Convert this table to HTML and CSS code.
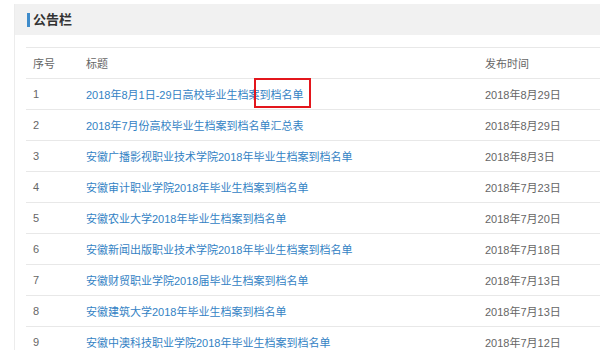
FILE: index.html
```html
<!DOCTYPE html>
<html lang="zh-CN">
<head>
<meta charset="utf-8">
<title>公告栏</title>
<link rel="stylesheet" href="styles.css">
</head>
<body>
<div class="panel">
  <div class="panel-head"><span class="panel-title">公告栏</span></div>
  <div class="panel-body">
    <table class="notice">
      <thead>
        <tr><th class="c-no">序号</th><th class="c-title">标题</th><th class="c-date">发布时间</th></tr>
      </thead>
      <tbody>
        <tr><td>1</td><td><a href="#">2018年8月1日-29日高校毕业生档案<span class="mark">到档名单</span></a></td><td>2018年8月29日</td></tr>
        <tr><td>2</td><td><a href="#">2018年7月份高校毕业生档案到档名单汇总表</a></td><td>2018年8月29日</td></tr>
        <tr><td>3</td><td><a href="#">安徽广播影视职业技术学院2018年毕业生档案到档名单</a></td><td>2018年8月3日</td></tr>
        <tr><td>4</td><td><a href="#">安徽审计职业学院2018年毕业生档案到档名单</a></td><td>2018年7月23日</td></tr>
        <tr><td>5</td><td><a href="#">安徽农业大学2018年毕业生档案到档名单</a></td><td>2018年7月20日</td></tr>
        <tr><td>6</td><td><a href="#">安徽新闻出版职业技术学院2018年毕业生档案到档名单</a></td><td>2018年7月18日</td></tr>
        <tr><td>7</td><td><a href="#">安徽财贸职业学院2018届毕业生档案到档名单</a></td><td>2018年7月13日</td></tr>
        <tr><td>8</td><td><a href="#">安徽建筑大学2018年毕业生档案到档名单</a></td><td>2018年7月13日</td></tr>
        <tr><td>9</td><td><a href="#">安徽中澳科技职业学院2018年毕业生档案到档名单</a></td><td>2018年7月12日</td></tr>
      </tbody>
    </table>
  </div>
</div>
</body>
</html>
```
FILE: styles.css
```css
html, body {
  margin: 0;
  padding: 0;
  overflow: hidden;
  background: #fff;
}
body {
  font-family: "Liberation Sans", "Noto Sans CJK SC", sans-serif;
  font-size: 11px;
  color: #666;
}
.panel {
  margin: 4px 0 0 14px;
  border-left: 1px solid #ececec;
  width: 585px;
}
.panel-head {
  height: 31px;
  background: #f1f1f1;
  display: flex;
  align-items: center;
  padding-left: 12px;
}
.panel-title {
  border-left: 3px solid #3f8ccb;
  padding-left: 3px;
  font-size: 13px;
  line-height: 14px;
  font-weight: bold;
  color: #333;
}
.panel-body {
  padding: 12px 0 0 11px;
}
.notice {
  border-collapse: collapse;
  width: 574px;
}
.notice th,
.notice td {
  text-align: left;
  font-weight: normal;
  height: 30px;
  padding: 0 0 0 7px;
  border-top: 1px solid #e8e8e8;
  border-bottom: 1px solid #e8e8e8;
  white-space: nowrap;
}
.c-no { width: 46px; }
.c-title { width: 392px; }
.notice a {
  color: #3382c4;
  text-decoration: none;
}
.mark {
  position: relative;
}
.mark::after {
  content: "";
  position: absolute;
  left: -6px;
  right: -7px;
  top: -11px;
  height: 26px;
  border: 2px solid #e3161c;
}
```
